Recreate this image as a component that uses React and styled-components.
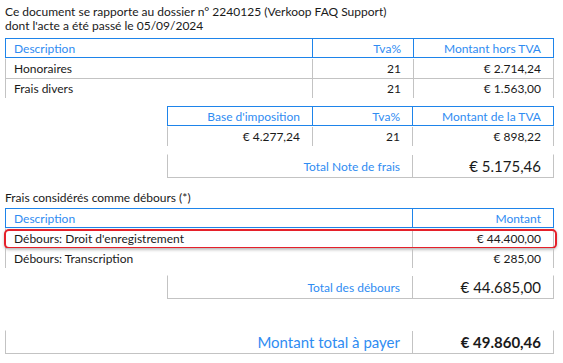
import styled, { createGlobalStyle } from "styled-components";

const GlobalStyle = createGlobalStyle`
  body {
    margin: 0;
    background: #ffffff;
    font-family: Lato, "Liberation Sans", sans-serif;
    font-size: 12px;
    color: #1a1a1a;
  }
`;

const BLUE_TEXT = "#2f8cf2";
const BLUE_LINE = "#1e84ea";
const GREY_LINE = "#c3c3c3";

const Page = styled.div`
  width: 549px;
  padding: 5px 0 0 5px;
`;

const Intro = styled.div`
  line-height: 14px;
  margin-bottom: 5px;
`;

const Table = styled.div`
  margin-left: ${(p) => p.$indent || 0}px;
  margin-top: ${(p) => p.$top || 0}px;
`;

const Row = styled.div`
  display: grid;
  grid-template-columns: ${(p) => p.$cols};
  height: ${(p) => p.$height || 20}px;
  position: relative;
  border-left: 1px solid ${(p) => (p.$head ? BLUE_LINE : GREY_LINE)};
  border-right: 1px solid ${(p) => (p.$head ? BLUE_LINE : GREY_LINE)};
  border-top: 1px solid ${(p) => (p.$head ? BLUE_LINE : p.$first ? "transparent" : GREY_LINE)};
  border-bottom: ${(p) => (p.$head ? `1px solid ${BLUE_LINE}` : p.$closed ? `1px solid ${GREY_LINE}` : "0")};
  color: ${(p) => (p.$head ? BLUE_TEXT : "inherit")};
  box-sizing: border-box;
`;

const Cell = styled.div`
  display: flex;
  align-items: center;
  justify-content: ${(p) => (p.$right ? "flex-end" : "flex-start")};
  padding: ${(p) => (p.$right ? "0 12px 0 0" : "0 0 0 8px")};
  border-left: ${(p) => (p.$first ? "0" : `1px solid ${p.$head ? BLUE_LINE : GREY_LINE}`)};
  color: ${(p) => (p.$label ? BLUE_TEXT : "inherit")};
  font-size: ${(p) => p.$size || 12}px;
  font-weight: ${(p) => (p.$bold ? 700 : 400)};
  white-space: nowrap;
`;

const Highlight = styled.div`
  position: absolute;
  left: -2px;
  right: -4px;
  top: 0;
  bottom: -1px;
  border: 2px solid #e5202a;
  border-radius: 5px;
  box-shadow: 0 1px 3px rgba(0, 0, 0, 0.25);
  pointer-events: none;
`;

const SectionTitle = styled.div`
  margin-top: 13px;
  line-height: 14px;
  margin-bottom: 3px;
`;

function DataTable({ cols, head, rows, indent, top, highlight }) {
  return (
    <Table $indent={indent} $top={top}>
      <Row $cols={cols} $head>
        {head.map((h, i) => (
          <Cell key={i} $head $first={i === 0} $right={i > 0 || h.right}>
            {h.label}
          </Cell>
        ))}
      </Row>
      {rows.map((r, ri) => (
        <Row key={ri} $cols={cols} $first={ri === 0}>
          {r.map((c, ci) => (
            <Cell key={ci} $first={ci === 0} $right={ci > 0 || head[0].right}>
              {c}
            </Cell>
          ))}
          {highlight === ri && <Highlight />}
        </Row>
      ))}
    </Table>
  );
}

function TotalBox({ cols, label, value, indent, top, big, bold }) {
  return (
    <Table $indent={indent} $top={top}>
      <Row $cols={cols} $height={24} $closed $first>
        <Cell $first $right $label $size={big ? 15 : 12}>
          {label}
        </Cell>
        <Cell $right $size={15} $bold={bold}>
          {value}
        </Cell>
      </Row>
    </Table>
  );
}

export default function App() {
  return (
    <Page>
      <GlobalStyle />
      <Intro>
        Ce document se rapporte au dossier n° 2240125 (Verkoop FAQ Support)
        <br />
        dont l'acte a été passé le 05/09/2024
      </Intro>
      <DataTable
        cols="306px 101px 1fr"
        head={[{ label: "Description" }, { label: "Tva%" }, { label: "Montant hors TVA" }]}
        rows={[
          ["Honoraires", "21", "€ 2.714,24"],
          ["Frais divers", "21", "€ 1.563,00"],
        ]}
      />
      <DataTable
        indent={162}
        top={8}
        cols="144px 100px 1fr"
        head={[{ label: "Base d'imposition", right: true }, { label: "Tva%" }, { label: "Montant de la TVA" }]}
        rows={[["€ 4.277,24", "21", "€ 898,22"]]}
      />
      <TotalBox indent={162} top={8} cols="244px 1fr" label="Total Note de frais" value="€ 5.175,46" />
      <SectionTitle>Frais considérés comme débours (*)</SectionTitle>
      <DataTable
        cols="406px 1fr"
        head={[{ label: "Description" }, { label: "Montant" }]}
        rows={[
          ["Débours: Droit d'enregistrement", "€ 44.400,00"],
          ["Débours: Transcription", "€ 285,00"],
        ]}
        highlight={0}
      />
      <TotalBox indent={162} top={7} cols="244px 1fr" label="Total des débours" value="€ 44.685,00" />
      <TotalBox top={31} cols="406px 1fr" label="Montant total à payer" value="€ 49.860,46" big bold />
    </Page>
  );
}
